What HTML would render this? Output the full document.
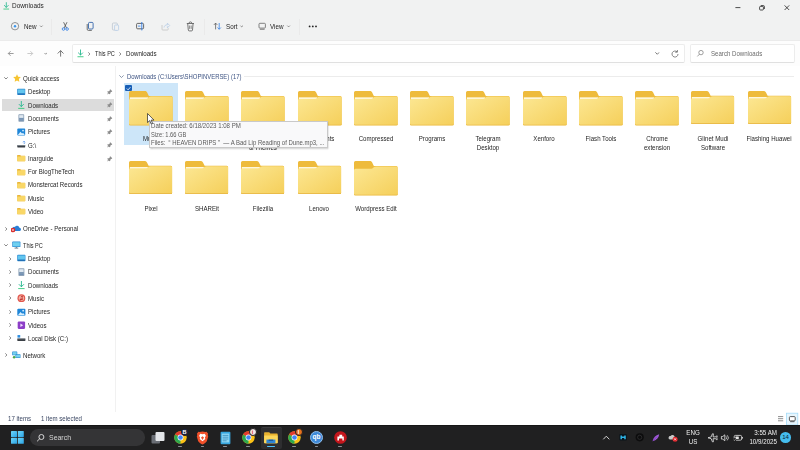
<!DOCTYPE html>
<html><head><meta charset="utf-8"><title>Downloads</title>
<style>
*{box-sizing:border-box;margin:0;padding:0}
html,body{width:800px;height:450px;overflow:hidden;background:#fff}
body{font-family:"Liberation Sans",sans-serif;font-size:6.9px;color:#1f1f1f;position:relative}
.a{position:absolute}
.t{position:absolute;white-space:nowrap;line-height:10px;height:10px;transform:scaleX(.885);transform-origin:0 50%}
.t,.lab,#tip div{filter:blur(.2px)}
svg{position:absolute;overflow:visible}
#top{left:0;top:0;width:800px;height:40px;background:#f1f2f2}
#nav{left:0;top:39.5px;width:800px;height:26.5px;background:#fdfdfd;border-top:1px solid #ebebeb}
#addr{left:71.5px;top:44.3px;width:613px;height:18.3px;background:#fff;border:1px solid #ececec;border-bottom-color:#e0e0e0;border-radius:2px}
#search{left:689.5px;top:44.3px;width:105.5px;height:18.3px;background:#fff;border:1px solid #ececec;border-bottom-color:#e0e0e0;border-radius:2px}
#side{left:0;top:66px;width:115.5px;height:346px;background:#fff;border-right:1px solid #f1f1f1}
#selrow{left:1.8px;top:99.4px;width:112.2px;height:11.7px;background:#dcdcdc}
#task{left:0;top:425px;width:800px;height:25px;background:#202021;border-top:1px solid #161616}
.lab{position:absolute;width:60px;text-align:center;line-height:8.55px;color:#1f1f1f;transform:scaleX(.885);transform-origin:50% 50%}
#selbox{left:123.6px;top:83.3px;width:54.9px;height:61.3px;background:#cde6f9}
#tip{left:148.6px;top:120.8px;width:179.4px;height:27.6px;background:#f9f9fa;border:1px solid #c9c9c9;box-shadow:.5px 1px 1.500px rgba(0,0,0,.22);color:#5a5a5a}
#tip div{position:absolute;left:1.7px;white-space:nowrap;line-height:8px;height:8px;transform:scaleX(.885);transform-origin:0 50%}
.sep{position:absolute;width:1px;background:#eaeaea;top:19px;height:15.5px}
</style></head><body>
<svg width="0" height="0" style="position:absolute"><defs>
<linearGradient id="fg" x1="0" y1="0" x2="1" y2="1"><stop offset="0" stop-color="#fce793"/><stop offset="1" stop-color="#f5cf5a"/></linearGradient>
<symbol id="folder" viewBox="0 0 43.2 33" preserveAspectRatio="none">
<path d="M1.500 0H15.600c1 0 1.700.4 2.200 1.200L19.600 4.700H41.700a1.500 1.500 0 0 1 1.500 1.500V31.500a1.500 1.500 0 0 1-1.500 1.500H1.500A1.500 1.500 0 0 1 0 31.500V1.500A1.500 1.500 0 0 1 1.500 0z" fill="#eebb3c"/>
<rect x="0.800" y="6.100" width="18" height="1.900" fill="#fffdf0"/>
<path d="M0 8.800a1.500 1.500 0 0 1 1.500-1.500H17c.8 0 1.400-.2 1.900-.8l.9-.7c.5-.4 1.100-.6 1.900-.6H41.700a1.500 1.500 0 0 1 1.500 1.500V31.500a1.500 1.500 0 0 1-1.500 1.500H1.500A1.500 1.500 0 0 1 0 31.500z" fill="url(#fg)"/>
<path d="M0 31.100v.4a1.500 1.500 0 0 0 1.500 1.500H41.700a1.500 1.500 0 0 0 1.500-1.500v-.4a1.500 1.500 0 0 1-1.500 1.200H1.500A1.500 1.500 0 0 1 0 31.100z" fill="#e6b440"/>
</symbol>
<symbol id="folderE" viewBox="0 0 43.2 33" preserveAspectRatio="none">
<path d="M1.500 0H15.600c1 0 1.700.4 2.200 1.200L19.600 4.700H41.700a1.500 1.500 0 0 1 1.500 1.500V31.500a1.500 1.500 0 0 1-1.500 1.500H1.500A1.500 1.500 0 0 1 0 31.500V1.500A1.500 1.500 0 0 1 1.500 0z" fill="#eebb3c"/>
<path d="M0 8.800a1.500 1.500 0 0 1 1.500-1.500H17c.8 0 1.400-.2 1.900-.8l.9-.7c.5-.4 1.100-.6 1.900-.6H41.700a1.500 1.500 0 0 1 1.500 1.500V31.500a1.500 1.500 0 0 1-1.500 1.500H1.500A1.500 1.500 0 0 1 0 31.500z" fill="url(#fg)"/>
<path d="M0 31.100v.4a1.500 1.500 0 0 0 1.500 1.500H41.700a1.500 1.500 0 0 0 1.500-1.500v-.4a1.500 1.500 0 0 1-1.500 1.200H1.500A1.500 1.500 0 0 1 0 31.100z" fill="#e6b440"/>
</symbol>
<symbol id="sfold" viewBox="0 0 9 8"><path d="M.6.8H3.2l1 .9H8.3a.5.5 0 0 1 .5.5V6.9a.5.5 0 0 1-.5.5H.6a.5.5 0 0 1-.5-.5V1.3A.5.5 0 0 1 .6.8z" fill="#e9b53a"/><path d="M.1 2.9a.5.5 0 0 1 .5-.5H3.6l.8-.6H8.3a.5.5 0 0 1 .5.5V6.9a.5.5 0 0 1-.5.5H.6a.5.5 0 0 1-.5-.5z" fill="#f9d767"/></symbol>
<symbol id="dl" viewBox="0 0 8 9"><path d="M4 .4V6M1.6 3.8 4 6.2 6.4 3.8" fill="none" stroke="#25b78f" stroke-width="1" stroke-linecap="round" stroke-linejoin="round"/><path d="M1 8.2H7" stroke="#2ec878" stroke-width="1" stroke-linecap="round"/></symbol>
<symbol id="desk" viewBox="0 0 9 8"><rect x=".2" y=".6" width="8.6" height="6.6" rx=".8" fill="#2d8fd6"/><rect x=".9" y="1.3" width="7.2" height="4.2" fill="#63c6ee"/><rect x=".9" y="5.6" width="7.2" height=".9" fill="#1c5fa6"/></symbol>
<symbol id="doc" viewBox="0 0 8 9"><rect x=".8" y=".3" width="6.4" height="8.4" rx=".8" fill="#8fa3b8"/><rect x="1.7" y="1.3" width="4.6" height="3" fill="#dfe8f0"/><rect x="1.7" y="5" width="4.6" height=".7" fill="#5f86b3"/><rect x="1.7" y="6.4" width="4.6" height=".7" fill="#5f86b3"/></symbol>
<symbol id="pic" viewBox="0 0 9 8"><rect x=".3" y=".4" width="8.4" height="7.2" rx="1" fill="#1f86d8"/><path d="M.9 7 3.6 3.8 5.3 5.6 6.3 4.8 8.2 7z" fill="#d7efff"/><circle cx="6.3" cy="2.5" r=".9" fill="#d7efff"/></symbol>
<symbol id="drv" viewBox="0 0 9 8"><rect x=".3" y="4" width="8.4" height="2.6" rx=".5" fill="#3a3f45"/><rect x=".3" y="4" width="8.4" height=".8" fill="#8c949c"/><path d="M6.400 1.200a1 1 0 1 1 1.400.9L7 2.900" fill="none" stroke="#2c7be5" stroke-width=".7"/></symbol>
<symbol id="drvc" viewBox="0 0 9 8"><rect x=".3" y="4.200" width="8.400" height="2.600" rx=".5" fill="#3a3f45"/><rect x=".3" y="4.200" width="8.400" height=".8" fill="#8c949c"/><rect x=".5" y=".8" width="2.800" height="2.600" fill="#2c8de0"/></symbol>
<symbol id="mus" viewBox="0 0 9 9"><circle cx="4.5" cy="4.5" r="4.2" fill="#e2574c"/><circle cx="4.5" cy="4.5" r="2.9" fill="#f4b0a4"/><path d="M4 2.4 6 2v3.6a.9.9 0 1 1-.6-.8V3.1l-1 .2v2.8a.9.9 0 1 1-.6-.8z" fill="#c23b36"/></symbol>
<symbol id="vid" viewBox="0 0 9 9"><rect x=".5" y=".5" width="8" height="8" rx="1.2" fill="#8d3fc8"/><path d="M3.4 2.6 6.4 4.5 3.4 6.4z" fill="#f0dcff"/></symbol>
<symbol id="pc" viewBox="0 0 9 8"><rect x=".3" y=".4" width="8.4" height="5.6" rx=".6" fill="#2a8bd4"/><rect x="1" y="1.1" width="7" height="4.2" fill="#6fd0f0"/><rect x="2.6" y="6.6" width="3.8" height=".9" fill="#5b6f80"/><rect x="4" y="6" width="1" height=".8" fill="#5b6f80"/></symbol>
<symbol id="net" viewBox="0 0 9 8"><rect x=".2" y=".4" width="5.2" height="3.8" rx=".4" fill="#2a8bd4"/><rect x=".8" y="1" width="4" height="2.6" fill="#77d3ee"/><rect x="3.6" y="3.2" width="5.2" height="3.8" rx=".4" fill="#2a8bd4"/><rect x="4.2" y="3.8" width="4" height="2.6" fill="#77d3ee"/><circle cx="2.2" cy="6.2" r="1.3" fill="#4aa84a"/></symbol>
<symbol id="od" viewBox="0 0 11 8"><path d="M3.2 6.6H9a1.8 1.8 0 0 0 .3-3.6A2.7 2.7 0 0 0 4.3 2 2.3 2.3 0 0 0 3.2 6.6z" fill="#2a7fd6"/><circle cx="2.2" cy="5.400" r="2.600" fill="#d92f2f"/><path d="M1.300 4.500 3.100 6.300M3.100 4.500 1.300 6.300" stroke="#fff" stroke-width=".7"/></symbol>
<symbol id="star" viewBox="0 0 9 9"><path d="M4.5.4 5.8 3.1l3 .4L6.600 5.600l.5 3L4.500 7.200 1.900 8.600l.5-3L.2 3.500l3-.4z" fill="#f6c431"/></symbol>
<symbol id="pin" viewBox="0 0 6 6"><path d="M3.500.300 5.700 2.500 5.100 3.100 4.600 2.900 3.600 3.900 3.500 5.200 2.900 5.800 1.900 4.700.500 5.900.100 5.900.100 5.500 1.300 4.100.200 3.100.800 2.500 2.100 2.400 3.100 1.400 2.900.900z" fill="#8d8d8d"/></symbol>
<symbol id="chr" viewBox="0 0 4 6"><path d="M.8.8 3 3 .8 5.200" fill="none" stroke="#444" stroke-width=".95" stroke-linecap="round" stroke-linejoin="round"/></symbol>
<symbol id="chd" viewBox="0 0 6 4"><path d="M.8.8 3 3 5.200.8" fill="none" stroke="#444" stroke-width=".95" stroke-linecap="round" stroke-linejoin="round"/></symbol>
</defs></svg>
<div class="a" id="top"></div><div class="a" id="nav"></div><div class="a" id="addr"></div><div class="a" id="search"></div>
<svg style="left:2.90px;top:1.90px" width="6.6" height="8" ><use href="#dl"/></svg>
<div class="t" style="left:12.2px;top:1.00px;font-size:7.100px;transform:scaleX(.905)">Downloads</div>
<svg style="left:730px;top:0" width="70" height="14"><path d="M5.400 7.600h5" stroke="#222" stroke-width=".8"/>
<rect x="29.600" y="6.400" width="3.800" height="3.600" rx=".8" fill="none" stroke="#222" stroke-width=".8"/><path d="M30.800 5.600h2.600a1 1 0 0 1 1 1v2.400" fill="none" stroke="#222" stroke-width=".8"/>
<path d="M54.600 5.400l4.600 4.600M59.200 5.400l-4.600 4.600" stroke="#222" stroke-width=".8"/></svg>
<svg style="left:0;top:14px" width="330" height="26">
<circle cx="15" cy="12.200" r="3.700" fill="none" stroke="#6a6a6a" stroke-width=".7"/><circle cx="15" cy="12.200" r="1.200" fill="#3a96ee"/>
<path d="M40 11.600l1.300 1.300 1.300-1.300" fill="none" stroke="#666" stroke-width=".7"/>
<!-- cut -->
<path d="M63.600 8.200l3 6M67 8.200l-3 6" stroke="#444" stroke-width=".75" fill="none"/><circle cx="63.500" cy="15" r="1.300" fill="none" stroke="#2c7be5" stroke-width=".8"/><circle cx="67.100" cy="15" r="1.300" fill="none" stroke="#2c7be5" stroke-width=".8"/>
<!-- copy -->
<rect x="88.500" y="8.400" width="4.600" height="6.600" rx="1" fill="none" stroke="#2b5fa8" stroke-width=".85"/><path d="M87.200 10v5.200a1.200 1.200 0 0 0 1.200 1.200h3.400" fill="none" stroke="#444" stroke-width=".75"/>
<!-- paste (disabled) -->
<rect x="112.400" y="9" width="5" height="7" rx="1" fill="none" stroke="#bcc6d2" stroke-width=".8"/><rect x="114.600" y="11" width="4" height="5.400" rx=".8" fill="#f1f2f2" stroke="#b5cbe6" stroke-width=".8"/>
<!-- rename -->
<rect x="136.600" y="9.400" width="7" height="5.400" rx="1" fill="none" stroke="#444" stroke-width=".8"/><path d="M141.800 8v8.400" stroke="#2c7be5" stroke-width=".9"/><path d="M138 12.100h2.400" stroke="#2c7be5" stroke-width=".8"/>
<!-- share disabled -->
<path d="M162 11v4.200a.8.800 0 0 0 .8.800h4.600a.8.800 0 0 0 .8-.8v-1" fill="none" stroke="#c4c4c4" stroke-width=".8"/><path d="M164 13.500c.4-2 1.600-2.700 3.400-2.700V9.200l2.300 2.300-2.300 2.300v-1.500" fill="none" stroke="#b5cbe6" stroke-width=".8"/>
<!-- delete -->
<path d="M186.800 9.500h7.200M187.700 9.500l.6 6.500a1 1 0 0 0 1 .9h2.200a1 1 0 0 0 1-.9l.6-6.500M189 9.300a1.400 1.400 0 0 1 2.800 0" fill="none" stroke="#555" stroke-width=".8"/><path d="M189.600 11.500v3.400M191.200 11.500v3.400" stroke="#555" stroke-width=".65"/>
<!-- sort -->
<path d="M215.600 15.400V9.200M213.900 10.900l1.700-1.800 1.700 1.800" fill="none" stroke="#555" stroke-width=".75"/><path d="M219.200 9v6.200M217.500 13.500l1.700 1.800 1.700-1.800" fill="none" stroke="#2c7be5" stroke-width=".75"/>
<path d="M240.400 11.600l1.300 1.300 1.300-1.300" fill="none" stroke="#666" stroke-width=".7"/>
<!-- view -->
<rect x="259" y="9.300" width="6.400" height="4.800" rx=".9" fill="none" stroke="#666" stroke-width=".8"/><path d="M259.800 15.300h4.800" stroke="#666" stroke-width=".8"/>
<path d="M287.300 11.600l1.300 1.300 1.300-1.300" fill="none" stroke="#666" stroke-width=".7"/>
<circle cx="309.600" cy="12.400" r=".9" fill="#222"/><circle cx="312.800" cy="12.400" r=".9" fill="#222"/><circle cx="316" cy="12.400" r=".9" fill="#222"/>
</svg>
<div class="t" style="left:24px;top:21.80px;font-size:7.100px">New</div>
<div class="t" style="left:225.6px;top:21.80px;font-size:7.100px">Sort</div>
<div class="t" style="left:270.4px;top:21.80px;font-size:7.100px">View</div>
<div class="sep" style="left:51.3px"></div>
<div class="sep" style="left:204.4px"></div>
<div class="sep" style="left:299.4px"></div>
<svg style="left:0;top:41px" width="72" height="25">
<path d="M8.400 12.500h5.200M10.600 10.200 8.300 12.500l2.300 2.300" fill="none" stroke="#7b7b7b" stroke-width=".75"/>
<path d="M27.400 12.500h5.200M30.400 10.200l2.300 2.300-2.300 2.300" fill="none" stroke="#b8b8b8" stroke-width=".75"/>
<path d="M44.500 12l1.200 1.200 1.200-1.200" fill="none" stroke="#666" stroke-width=".7"/>
<path d="M60.600 15.600V9.600M57.700 12.500l2.900-2.900 2.900 2.900" fill="none" stroke="#555" stroke-width=".8"/>
</svg>
<svg style="left:76.80px;top:49.20px" width="7" height="9" ><use href="#dl"/></svg>
<svg style="left:88.30px;top:51.60px" width="2.6" height="4" ><use href="#chr"/></svg>
<div class="t" style="left:95px;top:49.10px;font-size:7px;transform:scaleX(.8)">This PC</div>
<svg style="left:119.30px;top:51.60px" width="2.6" height="4" ><use href="#chr"/></svg>
<div class="t" style="left:125.6px;top:49.10px;font-size:7px">Downloads</div>
<svg style="left:654.90px;top:52.10px" width="4.6" height="3" ><use href="#chd"/></svg>
<svg style="left:670px;top:48.600px" width="10" height="10"><path d="M8 5a3 3 0 1 1-1-2.200" fill="none" stroke="#666" stroke-width=".8"/><path d="M7.400 1v2.200H5.200" fill="none" stroke="#666" stroke-width=".8"/></svg>
<svg style="left:696px;top:49px" width="9" height="9"><circle cx="5" cy="3.600" r="2.200" fill="none" stroke="#777" stroke-width=".7"/><path d="M3.400 5.200 1.400 7.400" stroke="#777" stroke-width=".7"/></svg>
<div class="t" style="left:710.8px;top:49.30px;color:#6b6b6b">Search Downloads</div>
<div class="a" id="side"></div><div class="a" id="selrow"></div>
<svg style="left:4.40px;top:77.15px" width="4" height="2.7" ><use href="#chd"/></svg>
<svg style="left:12.60px;top:74.20px" width="8" height="8" ><use href="#star"/></svg>
<div class="t" style="left:23.1px;top:74.00px;">Quick access</div>
<svg style="left:16.70px;top:87.75px" width="8.6" height="8.1" ><use href="#desk"/></svg>
<div class="t" style="left:27.7px;top:87.30px;">Desktop</div>
<svg style="left:107.00px;top:89.00px" width="5.6" height="5.6" ><use href="#pin"/></svg>
<svg style="left:16.70px;top:101.05px" width="8.6" height="8.1" ><use href="#dl"/></svg>
<div class="t" style="left:27.7px;top:100.60px;">Downloads</div>
<svg style="left:107.00px;top:102.30px" width="5.6" height="5.6" ><use href="#pin"/></svg>
<svg style="left:16.70px;top:114.35px" width="8.6" height="8.1" ><use href="#doc"/></svg>
<div class="t" style="left:27.7px;top:113.90px;">Documents</div>
<svg style="left:107.00px;top:115.60px" width="5.6" height="5.6" ><use href="#pin"/></svg>
<svg style="left:16.70px;top:127.65px" width="8.6" height="8.1" ><use href="#pic"/></svg>
<div class="t" style="left:27.7px;top:127.20px;">Pictures</div>
<svg style="left:107.00px;top:128.90px" width="5.6" height="5.6" ><use href="#pin"/></svg>
<svg style="left:16.70px;top:140.95px" width="8.6" height="8.1" ><use href="#drv"/></svg>
<div class="t" style="left:27.7px;top:140.50px;">G:\</div>
<svg style="left:107.00px;top:142.20px" width="5.6" height="5.6" ><use href="#pin"/></svg>
<svg style="left:16.70px;top:154.25px" width="8.6" height="8.1" ><use href="#sfold"/></svg>
<div class="t" style="left:27.7px;top:153.80px;">Inarguide</div>
<svg style="left:107.00px;top:155.50px" width="5.6" height="5.6" ><use href="#pin"/></svg>
<svg style="left:16.70px;top:167.55px" width="8.6" height="8.1" ><use href="#sfold"/></svg>
<div class="t" style="left:27.7px;top:167.10px;">For BlogTheTech</div>
<svg style="left:16.70px;top:180.85px" width="8.6" height="8.1" ><use href="#sfold"/></svg>
<div class="t" style="left:27.7px;top:180.40px;">Monstercat Records</div>
<svg style="left:16.70px;top:194.15px" width="8.6" height="8.1" ><use href="#sfold"/></svg>
<div class="t" style="left:27.7px;top:193.70px;">Music</div>
<svg style="left:16.70px;top:207.45px" width="8.6" height="8.1" ><use href="#sfold"/></svg>
<div class="t" style="left:27.7px;top:207.00px;">Video</div>
<svg style="left:5.10px;top:226.50px" width="2.6" height="4" ><use href="#chr"/></svg>
<svg style="left:10.80px;top:224.75px" width="10" height="7.5" ><use href="#od"/></svg>
<div class="t" style="left:23.1px;top:224.00px;">OneDrive - Personal</div>
<svg style="left:4.40px;top:243.85px" width="4" height="2.7" ><use href="#chd"/></svg>
<svg style="left:12.40px;top:241.10px" width="8.8" height="8.2" ><use href="#pc"/></svg>
<div class="t" style="left:23.1px;top:240.70px;transform:scaleX(.81)">This PC</div>
<svg style="left:9.40px;top:256.50px" width="2.6" height="4" ><use href="#chr"/></svg>
<svg style="left:16.70px;top:254.30px" width="8.8" height="8.4" ><use href="#desk"/></svg>
<div class="t" style="left:27.7px;top:254.00px;">Desktop</div>
<svg style="left:9.40px;top:269.80px" width="2.6" height="4" ><use href="#chr"/></svg>
<svg style="left:16.70px;top:267.60px" width="8.8" height="8.4" ><use href="#doc"/></svg>
<div class="t" style="left:27.7px;top:267.30px;">Documents</div>
<svg style="left:9.40px;top:283.10px" width="2.6" height="4" ><use href="#chr"/></svg>
<svg style="left:16.70px;top:280.90px" width="8.8" height="8.4" ><use href="#dl"/></svg>
<div class="t" style="left:27.7px;top:280.60px;">Downloads</div>
<svg style="left:9.40px;top:296.40px" width="2.6" height="4" ><use href="#chr"/></svg>
<svg style="left:16.70px;top:294.20px" width="8.8" height="8.4" ><use href="#mus"/></svg>
<div class="t" style="left:27.7px;top:293.90px;">Music</div>
<svg style="left:9.40px;top:309.70px" width="2.6" height="4" ><use href="#chr"/></svg>
<svg style="left:16.70px;top:307.50px" width="8.8" height="8.4" ><use href="#pic"/></svg>
<div class="t" style="left:27.7px;top:307.20px;">Pictures</div>
<svg style="left:9.40px;top:323.00px" width="2.6" height="4" ><use href="#chr"/></svg>
<svg style="left:16.70px;top:320.80px" width="8.8" height="8.4" ><use href="#vid"/></svg>
<div class="t" style="left:27.7px;top:320.50px;">Videos</div>
<svg style="left:9.40px;top:336.30px" width="2.6" height="4" ><use href="#chr"/></svg>
<svg style="left:16.70px;top:334.10px" width="8.8" height="8.4" ><use href="#drvc"/></svg>
<div class="t" style="left:27.7px;top:333.80px;">Local Disk (C:)</div>
<svg style="left:5.10px;top:353.20px" width="2.6" height="4" ><use href="#chr"/></svg>
<svg style="left:12.40px;top:351.10px" width="8.8" height="8.2" ><use href="#net"/></svg>
<div class="t" style="left:23.1px;top:350.70px;">Network</div>
<svg style="left:118.900px;top:75.100px" width="5" height="3.400" viewBox="0 0 6 4"><path d="M.8.8 3 3 5.200.8" fill="none" stroke="#66758f" stroke-width=".9" stroke-linecap="round" stroke-linejoin="round"/></svg>
<div class="t" style="left:127.2px;top:72.10px;color:#3d5382;font-size:6.700px">Downloads (C:\Users\SHOPINVERSE) (17)</div>
<div class="a" style="left:243.500px;top:76.400px;width:550px;height:1px;background:#ececec"></div>
<div class="a" id="selbox"></div>
<div class="a" style="left:125.400px;top:84.500px;width:7.100px;height:6.700px;background:#195fb6;border-radius:1px"></div>
<svg style="left:125.400px;top:84.500px" width="7.100" height="6.700"><path d="M1.800 3.500l1.300 1.300 2.300-2.600" fill="none" stroke="#fff" stroke-width=".8"/></svg>
<svg style="left:128.80px;top:90.90px" width="43.8" height="34.6" preserveAspectRatio="none"><use href="#folder"/></svg>
<div class="lab" style="left:120.50px;top:135.25px">Music</div>
<svg style="left:185.05px;top:90.90px" width="43.8" height="34.6" preserveAspectRatio="none"><use href="#folder"/></svg>
<div class="lab" style="left:176.75px;top:135.25px">Software</div>
<svg style="left:241.30px;top:90.90px" width="43.8" height="34.6" preserveAspectRatio="none"><use href="#folder"/></svg>
<div class="lab" style="left:233.00px;top:135.25px">Plugins<br>&amp; Themes</div>
<svg style="left:297.55px;top:90.90px" width="43.8" height="34.6" preserveAspectRatio="none"><use href="#folder"/></svg>
<div class="lab" style="left:289.25px;top:135.25px">Documents</div>
<svg style="left:353.80px;top:90.90px" width="43.8" height="34.6" preserveAspectRatio="none"><use href="#folder"/></svg>
<div class="lab" style="left:345.50px;top:135.25px">Compressed</div>
<svg style="left:410.05px;top:90.90px" width="43.8" height="34.6" preserveAspectRatio="none"><use href="#folder"/></svg>
<div class="lab" style="left:401.75px;top:135.25px">Programs</div>
<svg style="left:466.30px;top:90.90px" width="43.8" height="34.6" preserveAspectRatio="none"><use href="#folder"/></svg>
<div class="lab" style="left:458.00px;top:135.25px">Telegram<br>Desktop</div>
<svg style="left:522.55px;top:90.90px" width="43.8" height="34.6" preserveAspectRatio="none"><use href="#folder"/></svg>
<div class="lab" style="left:514.25px;top:135.25px">Xenforo</div>
<svg style="left:578.80px;top:90.90px" width="43.8" height="34.6" preserveAspectRatio="none"><use href="#folder"/></svg>
<div class="lab" style="left:570.50px;top:135.25px">Flash Tools</div>
<svg style="left:635.05px;top:90.90px" width="43.8" height="34.6" preserveAspectRatio="none"><use href="#folder"/></svg>
<div class="lab" style="left:626.75px;top:135.25px">Chrome<br>extension</div>
<svg style="left:691.30px;top:90.90px" width="43.3" height="33" preserveAspectRatio="none"><use href="#folder"/></svg>
<div class="lab" style="left:683.00px;top:135.25px">Glinet Mudi<br>Software</div>
<svg style="left:747.55px;top:90.90px" width="43.3" height="33" preserveAspectRatio="none"><use href="#folder"/></svg>
<div class="lab" style="left:739.25px;top:135.25px">Flashing Huawei</div>
<svg style="left:128.80px;top:160.90px" width="43.3" height="33" preserveAspectRatio="none"><use href="#folder"/></svg>
<div class="lab" style="left:120.50px;top:205.25px">Pixel</div>
<svg style="left:185.05px;top:160.90px" width="43.3" height="33" preserveAspectRatio="none"><use href="#folder"/></svg>
<div class="lab" style="left:176.75px;top:205.25px">SHAREit</div>
<svg style="left:241.30px;top:160.90px" width="43.3" height="33" preserveAspectRatio="none"><use href="#folder"/></svg>
<div class="lab" style="left:233.00px;top:205.25px">Filezilla</div>
<svg style="left:297.55px;top:160.90px" width="43.3" height="33" preserveAspectRatio="none"><use href="#folder"/></svg>
<div class="lab" style="left:289.25px;top:205.25px">Lenovo</div>
<svg style="left:353.80px;top:160.90px" width="43.8" height="34.6" preserveAspectRatio="none"><use href="#folderE"/></svg>
<div class="lab" style="left:345.50px;top:205.25px">Wordpress Edit</div>
<div class="a" id="tip"><div style="top:0.700px">Date created: 6/18/2023 1:08 PM</div><div style="top:8.900px;transform:scaleX(.83)">Size: 1.66 GB</div><div style="top:17.200px;transform:scaleX(.868)">Files: &nbsp;“ HEAVEN DRIPS ” &nbsp;— A Bad Lip Reading of Dune.mp3, ...</div></div>
<svg style="left:147.200px;top:113.200px" width="8" height="12"><path d="M.5.500V9.600L2.700 7.600 4.200 11l1.400-.6L4.100 7.100H7z" fill="#fff" stroke="#222" stroke-width=".7" stroke-linejoin="round"/></svg>
<div class="t" style="left:7.5px;top:414.00px;color:#3b4763">17 items</div>
<div class="t" style="left:41.2px;top:414.00px;color:#3b4763">1 item selected</div>
<svg style="left:774px;top:413px" width="26" height="12"><path d="M4 3.600h5.200M4 5.700h5.200M4 7.800h5.200" stroke="#808080" stroke-width=".9"/>
<rect x="12.400" y=".200" width="11.400" height="11.800" fill="#e6f5fd" stroke="#a4dbf8" stroke-width=".8"/><rect x="15.400" y="3.600" width="5.800" height="4.300" rx=".9" fill="#fff" stroke="#333" stroke-width=".8"/><path d="M16.200 8.700h4.200" stroke="#333" stroke-width=".7"/></svg>
<div class="a" id="task"></div>
<svg style="left:10.500px;top:431px" width="13" height="13"><defs><linearGradient id="wg" x1="0" y1="0" x2="1" y2="1"><stop offset="0" stop-color="#6fd6f7"/><stop offset="1" stop-color="#2aa3e6"/></linearGradient></defs>
<rect x="0" y="0" width="6" height="6" rx=".600" fill="url(#wg)"/><rect x="6.800" y="0" width="6" height="6" rx=".600" fill="url(#wg)"/><rect x="0" y="6.800" width="6" height="6" rx=".600" fill="url(#wg)"/><rect x="6.800" y="6.800" width="6" height="6" rx=".600" fill="url(#wg)"/></svg>
<div class="a" style="left:30px;top:429.200px;width:114.500px;height:16.400px;border-radius:8.200px;background:#343436"></div>
<svg style="left:35.500px;top:433px" width="10" height="10"><circle cx="5.400" cy="4" r="2.500" fill="none" stroke="#e8e8e8" stroke-width=".9"/><path d="M3.600 5.800 1.400 8" stroke="#e8e8e8" stroke-width=".9" stroke-linecap="round"/></svg>
<div class="t" style="left:48.7px;top:433.20px;font-size:7.800px;color:#d6d6d6;transform:scaleX(.89)">Search</div>
<div class="a" style="left:261px;top:427px;width:20.600px;height:21.500px;border-radius:2px;background:#2e2e30;border-top:1px solid #3c3c3e"></div>
<div class="a" style="left:266.800px;top:445.800px;width:8.400px;height:1.500px;border-radius:1px;background:#4cc2ff"></div>
<div class="a" style="left:178.40px;top:446.200px;width:3.200px;height:1.200px;border-radius:.600px;background:#8b8f95"></div>
<div class="a" style="left:201.10px;top:446.200px;width:3.200px;height:1.200px;border-radius:.600px;background:#8b8f95"></div>
<div class="a" style="left:223.40px;top:446.200px;width:3.200px;height:1.200px;border-radius:.600px;background:#8b8f95"></div>
<div class="a" style="left:246.40px;top:446.200px;width:3.200px;height:1.200px;border-radius:.600px;background:#8b8f95"></div>
<div class="a" style="left:292.40px;top:446.200px;width:3.200px;height:1.200px;border-radius:.600px;background:#8b8f95"></div>
<div class="a" style="left:314.90px;top:446.200px;width:3.200px;height:1.200px;border-radius:.600px;background:#8b8f95"></div>
<div class="a" style="left:338.40px;top:446.200px;width:3.200px;height:1.200px;border-radius:.600px;background:#8b8f95"></div>
<svg style="left:150.500px;top:430.500px" width="14" height="14"><rect x=".500" y="4" width="8.500" height="8.500" rx="1" fill="#6a6e75"/><rect x="4.500" y="1" width="9" height="9" rx="1" fill="#e4e6e9"/></svg>
<svg style="left:173.50px;top:430.80px" width="13" height="13" viewBox="-6.500 -6.500 13 13">
<circle r="6.200" fill="#fbc116"/><path d="M0 0 L-5.370 -3.100 A6.200 6.200 0 0 1 5.370 -3.100z" fill="#e33b2e"/><path d="M0 0 L-5.370 -3.100 A6.200 6.200 0 0 0 0 6.200z" fill="#2da94f"/>
<circle r="2.900" fill="#fff"/><circle r="2.300" fill="#4285f4"/></svg>
<div class="a" style="left:180.50px;top:428.30px;width:8px;height:8px;border-radius:4px;background:#1c2748;border:.600px solid #202021;text-align:center;font-size:5.500px;line-height:7px;font-weight:bold;color:#fff">B</div>
<svg style="left:196.200px;top:430.500px" width="13" height="14"><path d="M6.500.600 9.300 1l1.300-.3 1.500 2-.4 1.300.5 1.500-1.300 4.600C10.400 11.600 8 13 6.500 13.600 5 13 2.600 11.600 2.100 10.100L.800 5.500l.500-1.500L.900 2.700l1.500-2L3.700 1z" fill="#f0502a"/><path d="M6.500 3.200l2.200-.4 1.200 1.900-1 1.900.4 1.300-2.800 2.400L3.700 7.900l.4-1.300-1-1.900 1.200-1.900z" fill="#fff"/><path d="M6.500 5.200 8 6.400 6.500 9 5 6.400z" fill="#f0502a"/></svg>
<svg style="left:219.500px;top:430.500px" width="11" height="14"><rect x=".600" y=".800" width="9.800" height="12.400" rx="1" fill="#37a6de"/><rect x="1.800" y="2.600" width="7.400" height="8.800" fill="#8fd8f5"/><path d="M2.600 4.400h5.800M2.600 6.200h5.800M2.600 8h5.800M2.600 9.800h4" stroke="#2b7fb3" stroke-width=".700"/></svg>
<svg style="left:241.50px;top:430.80px" width="13" height="13" viewBox="-6.500 -6.500 13 13">
<circle r="6.200" fill="#fbc116"/><path d="M0 0 L-5.370 -3.100 A6.200 6.200 0 0 1 5.370 -3.100z" fill="#e33b2e"/><path d="M0 0 L-5.370 -3.100 A6.200 6.200 0 0 0 0 6.200z" fill="#2da94f"/>
<circle r="2.900" fill="#fff"/><circle r="2.300" fill="#4285f4"/></svg>
<div class="a" style="left:248.50px;top:428.30px;width:8px;height:8px;border-radius:4px;background:#f1e6e6;border:.600px solid #202021;text-align:center;font-size:5.500px;line-height:7px;font-weight:bold;color:#d33">i</div>
<svg style="left:264.200px;top:431px" width="14" height="13"><path d="M.800 1.200h4.400l1.200 1.400h6.600a.700.700 0 0 1 .700.700v8.200a.700.700 0 0 1-.700.700H.800a.700.700 0 0 1-.700-.700V1.900a.700.700 0 0 1 .700-.700z" fill="#e9b22f"/><path d="M.100 4.600h13.600v6.900a.700.700 0 0 1-.700.700H.800a.700.700 0 0 1-.700-.700z" fill="#fbd65a"/><rect x="2.400" y="8.600" width="9" height="3.600" fill="#2f86d6"/><rect x="4.600" y="8.600" width="4.600" height="1.400" fill="#1c5a9c"/></svg>
<svg style="left:287.50px;top:430.80px" width="13" height="13" viewBox="-6.500 -6.500 13 13">
<circle r="6.200" fill="#fbc116"/><path d="M0 0 L-5.370 -3.100 A6.200 6.200 0 0 1 5.370 -3.100z" fill="#e33b2e"/><path d="M0 0 L-5.370 -3.100 A6.200 6.200 0 0 0 0 6.200z" fill="#2da94f"/>
<circle r="2.900" fill="#fff"/><circle r="2.300" fill="#4285f4"/></svg>
<div class="a" style="left:294.50px;top:428.30px;width:8px;height:8px;border-radius:4px;background:#e8711c;border:.600px solid #202021;text-align:center;font-size:5.500px;line-height:7px;font-weight:bold;color:#fff">I</div>
<div class="a" style="left:309.900px;top:430.700px;width:13.200px;height:13.200px;border-radius:7px;background:#3f8ad8;border:1px solid #8fc0ef;color:#fff;font-size:6.500px;line-height:10.500px;text-align:center;font-weight:bold">qb</div>
<svg style="left:333.500px;top:430.700px" width="13" height="13"><circle cx="6.500" cy="6.500" r="6.300" fill="#c4161c"/><path d="M3.400 9.400V5.600h2V3.800h2.800v1.800h1.600v3.800H8.400V7.400H5v2z" fill="#fff"/></svg>
<svg style="left:600px;top:430px" width="150" height="16">
<path d="M3.300 9.300 6.300 6.200 9.300 9.300" fill="none" stroke="#dcdcdc" stroke-width=".95"/>
<rect x="19.400" y="4" width="7.400" height="6.600" rx="1" fill="#0b141b"/><path d="M21.200 5.400v3.800M25 5.400v3.800M21.200 7.300h3.800" stroke="#2fb4e6" stroke-width="1.500" fill="none"/>
<circle cx="39.700" cy="7.300" r="4.100" fill="#0c0c0d"/><circle cx="39.700" cy="7.300" r="2.100" fill="none" stroke="#2c2c2e" stroke-width=".900"/>
<path d="M52.600 11.200c.6-3.600 3-6 6.600-7-.4 3.600-2.800 6-6.600 7z" fill="#a05ad8"/><path d="M52.600 11.200 57 6.600" stroke="#6a2fa8" stroke-width=".500"/>
<path d="M69.800 9.600h4.600a1.400 1.400 0 0 0 .2-2.800 2.200 2.200 0 0 0-4-.7 1.800 1.800 0 0 0-.8 3.500z" fill="#c9c9c9"/><circle cx="75.100" cy="9.300" r="2.500" fill="#de2228"/><path d="M74.100 8.300l2 2M76.100 8.300l-2 2" stroke="#fff" stroke-width=".700"/>
<path d="M108 7.800l3.200-.9 1.200-3.100h1l-.3 3.100h2.600l.8-1h.7l-.4 1.900.4 1.900h-.7l-.8-1h-2.600l.3 3.100h-1l-1.200-3.100-3.200-.9z" fill="none" stroke="#e8e8e8" stroke-width=".800" stroke-linejoin="round"/>
<path d="M121.400 6.500h1.400l2-1.700v6l-2-1.700h-1.400z" fill="none" stroke="#e8e8e8" stroke-width=".800" stroke-linejoin="round"/><path d="M126 6.300a2 2 0 0 1 0 3M127.200 5.200a3.600 3.600 0 0 1 0 5.200" fill="none" stroke="#e8e8e8" stroke-width=".700"/>
<rect x="134.200" y="5.400" width="7.400" height="4.800" rx="1.200" fill="none" stroke="#e8e8e8" stroke-width=".800"/><rect x="135.400" y="6.600" width="3.400" height="2.400" rx=".500" fill="#e8e8e8"/><path d="M142.400 7v1.600" stroke="#e8e8e8" stroke-width=".900"/><circle cx="134.600" cy="9.800" r="1.700" fill="#202021"/><path d="M133.800 9.800l.6.700 1.100-1.300" stroke="#e8e8e8" stroke-width=".600" fill="none"/>
</svg>
<div class="t" style="left:682.900px;top:428px;width:20px;text-align:center;color:#f0f0f0;font-size:6.600px;transform:scaleX(.94);transform-origin:50% 50%">ENG</div>
<div class="t" style="left:682.900px;top:436.600px;width:20px;text-align:center;color:#f0f0f0;font-size:6.600px;transform:scaleX(.94);transform-origin:50% 50%">US</div>
<div class="t" style="left:737px;top:428.300px;width:40px;text-align:right;color:#f0f0f0;font-size:6.600px;transform:scaleX(.94);transform-origin:100% 50%">3:55 AM</div>
<div class="t" style="left:737px;top:436.600px;width:40px;text-align:right;color:#f0f0f0;font-size:6.600px;transform:scaleX(.94);transform-origin:100% 50%">10/9/2025</div>
<div class="a" style="left:780.300px;top:432.200px;width:10.600px;height:10.600px;border-radius:5.300px;background:#45bdee;color:#0b2233;font-size:6px;line-height:10.600px;text-align:center">14</div>
</body></html>
